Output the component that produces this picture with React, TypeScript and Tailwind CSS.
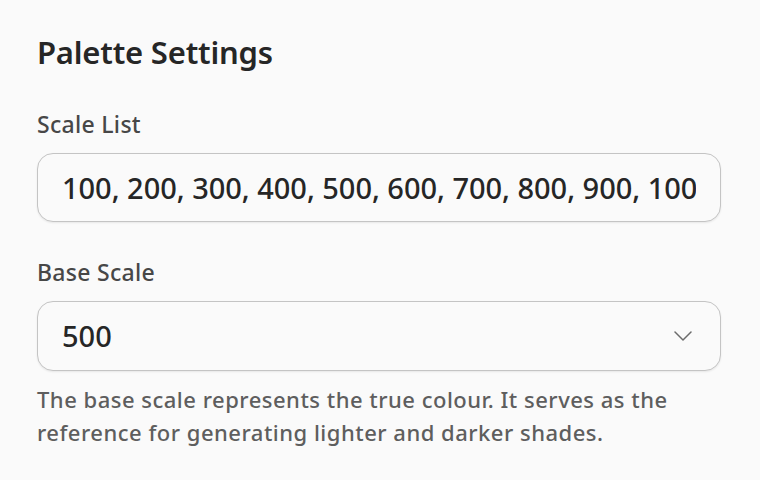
import React from 'react';

const scales = '100, 200, 300, 400, 500, 600, 700, 800, 900, 1000';

export default function App() {
  return (
    <div
      className="min-h-[480px] w-[760px] bg-[#fafafa] pl-[37px] pr-[39px] pt-[30px] text-[#262626]"
      style={{ fontFamily: '"Noto Sans", "Open Sans", sans-serif' }}
    >
      <h2 className="text-[31px] font-semibold leading-[44px] tracking-[-0.2px]">Palette Settings</h2>

      <label className="mt-[36px] block text-[23px] font-medium leading-[28px] tracking-[0.3px] text-[#474747]">
        Scale List
      </label>
      <input
        readOnly
        value={scales}
        className="mt-[15px] block h-[69px] w-full rounded-[16px] border-[1.5px] border-[#c4c4c4] bg-[#fafafa] px-[24px] text-[29px] font-medium tracking-[-0.03px] text-[#262626] shadow-[0_1px_2px_rgba(0,0,0,0.08)] outline-none"
      />

      <label className="mt-[36px] block text-[23px] font-medium leading-[28px] tracking-[0.3px] text-[#474747]">
        Base Scale
      </label>
      <div className="mt-[15px] flex h-[70px] w-full items-center justify-between rounded-[16px] border-[1.5px] border-[#c4c4c4] bg-[#fafafa] pl-[24px] pr-[28px] shadow-[0_1px_2px_rgba(0,0,0,0.08)]">
        <span className="text-[29px] font-medium text-[#262626]">500</span>
        <svg width="18" height="10" viewBox="0 0 18 10" fill="none" className="-mt-[1px]">
          <path d="M1 1l8 8 8-8" stroke="#6b6b6b" strokeWidth="1.5" strokeLinecap="round" strokeLinejoin="round" />
        </svg>
      </div>

      <p className="mt-[12px] text-[22px] font-medium leading-[33px] tracking-[0.5px] text-[#5e5e5e]">
        The base scale represents the true colour. It serves as the reference for generating lighter and darker shades.
      </p>
    </div>
  );
}
